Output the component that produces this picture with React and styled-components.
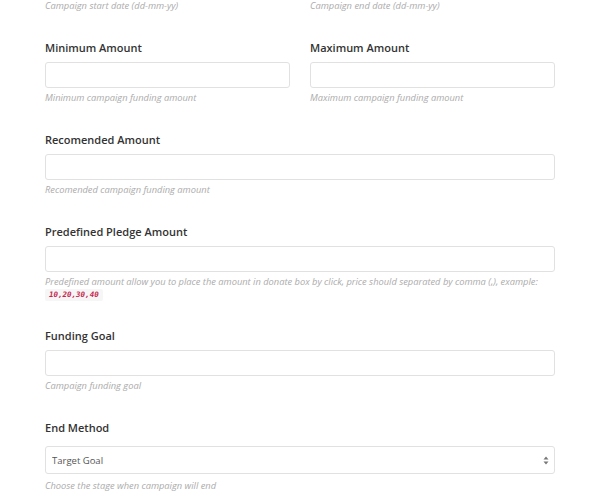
import styled, { createGlobalStyle } from "styled-components";

const GlobalStyle = createGlobalStyle`
  body {
    margin: 0;
    background: #ffffff;
    font-family: "Open Sans", "Liberation Sans", sans-serif;
  }
`;

const Form = styled.div`
  width: 510px;
  padding-left: 45px;
  padding-bottom: 20px;
`;

const Row = styled.div`
  display: grid;
  grid-template-columns: ${(p) => (p.$cols === 2 ? "1fr 1fr" : "1fr")};
  column-gap: 20px;
  margin-top: ${(p) => p.$top ?? 29}px;
`;

const Field = styled.div`
  display: flex;
  flex-direction: column;
  min-width: 0;
`;

const Label = styled.label`
  font-size: 11px;
  line-height: 14px;
  font-weight: 600;
  color: #333333;
  margin-bottom: 7px;
`;

const Input = styled.input`
  box-sizing: border-box;
  height: 26px;
  width: 100%;
  border: 1px solid #e1e1e1;
  border-radius: 3px;
  background: #fff;
  outline: none;
`;

const SelectWrap = styled.div`
  position: relative;
  margin-top: 4px;
`;

const Select = styled.select`
  appearance: none;
  box-sizing: border-box;
  height: 28px;
  width: 100%;
  border: 1px solid #e1e1e1;
  border-radius: 3px;
  background: #fff;
  padding: 0 6px;
  font-family: "Open Sans", "Liberation Sans", sans-serif;
  font-size: 9.5px;
  color: #555;
  outline: none;
`;

const Arrows = styled.svg`
  position: absolute;
  right: 6px;
  top: 10px;
  pointer-events: none;
`;

const Help = styled.p`
  margin: ${(p) => p.$mt ?? 4}px 0 0;
  font-size: 9.3px;
  line-height: 12px;
  font-style: italic;
  color: #ababab;
  white-space: nowrap;
`;

const Code = styled.code`
  display: inline-block;
  align-self: flex-start;
  margin-top: 1px;
  padding: 0 4px;
  background: #f6f6f6;
  border-radius: 2px;
  color: #c7254e;
  font-family: "DejaVu Sans Mono", "Liberation Mono", monospace;
  font-size: 7.5px;
  font-weight: bold;
  font-style: italic;
  line-height: 12px;
`;

const TextField = ({ label, help }) => (
  <Field>
    <Label>{label}</Label>
    <Input type="text" />
    <Help>{help}</Help>
  </Field>
);

export default function App() {
  return (
    <>
      <GlobalStyle />
      <Form>
        <Row $cols={2} $top={0}>
          <Help $mt={0}>Campaign start date (dd-mm-yy)</Help>
          <Help $mt={0}>Campaign end date (dd-mm-yy)</Help>
        </Row>
        <Row $cols={2} $top={29}>
          <TextField label="Minimum Amount" help="Minimum campaign funding amount" />
          <TextField label="Maximum Amount" help="Maximum campaign funding amount" />
        </Row>
        <Row>
          <TextField label="Recomended Amount" help="Recomended campaign funding amount" />
        </Row>
        <Row>
          <Field>
            <Label>Predefined Pledge Amount</Label>
            <Input type="text" />
            <Help>
              Predefined amount allow you to place the amount in donate box by click, price should separated by comma (,), example:
            </Help>
            <Code>10,20,30,40</Code>
          </Field>
        </Row>
        <Row $top={28}>
          <TextField label="Funding Goal" help="Campaign funding goal" />
        </Row>
        <Row>
          <Field>
            <Label>End Method</Label>
            <SelectWrap>
              <Select defaultValue="target">
                <option value="target">Target Goal</option>
                <option value="date">Target Date</option>
                <option value="both">Target Goal &amp; Date</option>
                <option value="never">Never End</option>
              </Select>
              <Arrows width="6" height="9" viewBox="0 0 6 9">
                <path d="M3 0.5 L5.5 3.5 H0.5 Z M3 8.5 L5.5 5.5 H0.5 Z" fill="#777" />
              </Arrows>
            </SelectWrap>
            <Help $mt={6}>Choose the stage when campaign will end</Help>
          </Field>
        </Row>
      </Form>
    </>
  );
}
